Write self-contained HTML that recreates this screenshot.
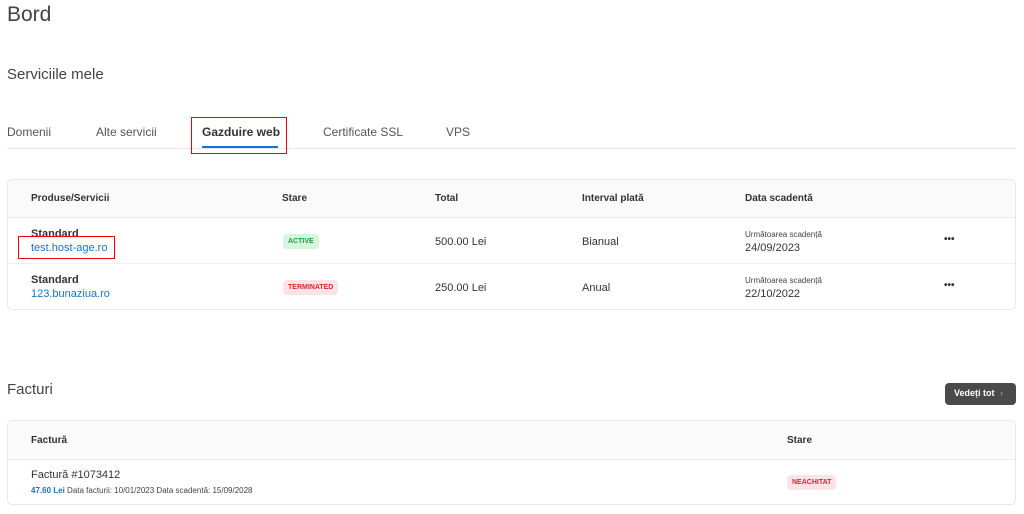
<!DOCTYPE html>
<html><head><meta charset="utf-8"><style>
*{margin:0;padding:0;box-sizing:border-box}
body{width:1024px;height:514px;background:#fff;font-family:"Liberation Sans",sans-serif;color:#333;position:relative;overflow:hidden}
.a{position:absolute;white-space:nowrap}
.card{position:absolute;left:7px;width:1009px;border:1px solid #e8e8e8;border-radius:5px;overflow:hidden;background:#fff}
.hd{background:#fafafa;border-bottom:1px solid #ececec;position:absolute;left:0;right:0;top:0}
.th{font-size:10px;font-weight:bold;color:#333}
.row{position:absolute;left:0;right:0;border-bottom:1px solid #efefef}
.b{font-size:11px;font-weight:bold;color:#333}
.lk{font-size:11px;color:#1a73c8}
.tx{font-size:11px;color:#333}
.sm{font-size:8px;color:#444}
.badge{font-size:7px;font-weight:bold;padding:4px 5px;border-radius:4px}
.dots{font-size:10px;font-weight:bold;color:#333}
</style></head><body>
<div class="a" style="left:7px;top:3px;font-size:21px;color:#444">Bord</div>
<div class="a" style="left:7px;top:66px;font-size:15px;color:#444">Serviciile mele</div>

<div class="a" style="left:7px;top:148px;width:1009px;height:1px;background:#e6e6e6"></div>
<div class="a" style="left:7px;top:125px;font-size:12px;color:#555">Domenii</div>
<div class="a" style="left:96px;top:125px;font-size:12px;color:#555">Alte servicii</div>
<div class="a" style="left:202px;top:125px;font-size:12px;font-weight:bold;color:#333">Gazduire web</div>
<div class="a" style="left:323px;top:125px;font-size:12px;color:#555">Certificate SSL</div>
<div class="a" style="left:446px;top:125px;font-size:12px;color:#555">VPS</div>
<div class="a" style="left:202px;top:146px;width:76px;height:2px;background:#1a73c8"></div>
<div class="a" style="left:191px;top:117px;width:96px;height:37px;border:1.5px solid #e00"></div>

<div class="card" style="top:179px;height:131px">
 <div class="hd" style="height:38px"></div>
 <div class="a th" style="left:23px;top:13px">Produse/Servicii</div>
 <div class="a th" style="left:274px;top:13px">Stare</div>
 <div class="a th" style="left:427px;top:13px">Total</div>
 <div class="a th" style="left:574px;top:13px">Interval plată</div>
 <div class="a th" style="left:737px;top:13px">Data scadentă</div>
 <div class="row" style="top:38px;height:46px"></div>
 <div class="a b" style="left:23px;top:48px">Standard</div>
 <div class="a lk" style="left:23px;top:62px">test.host-age.ro</div>
 <div class="a badge" style="left:275px;top:54px;background:#d5f5dc;color:#1e9e3e">ACTIVE</div>
 <div class="a tx" style="left:427px;top:56px">500.00 Lei</div>
 <div class="a tx" style="left:574px;top:56px">Bianual</div>
 <div class="a sm" style="left:737px;top:50px">Următoarea scadență</div>
 <div class="a tx" style="left:737px;top:62px">24/09/2023</div>
 <div class="a dots" style="left:936px;top:54px">•••</div>
 <div class="a b" style="left:23px;top:94px">Standard</div>
 <div class="a lk" style="left:23px;top:108px">123.bunaziua.ro</div>
 <div class="a badge" style="left:275px;top:100px;background:#fde3e5;color:#d8263a">TERMINATED</div>
 <div class="a tx" style="left:427px;top:102px">250.00 Lei</div>
 <div class="a tx" style="left:574px;top:102px">Anual</div>
 <div class="a sm" style="left:737px;top:96px">Următoarea scadență</div>
 <div class="a tx" style="left:737px;top:108px">22/10/2022</div>
 <div class="a dots" style="left:936px;top:100px">•••</div>
</div>
<div class="a" style="left:18px;top:236px;width:97px;height:23px;border:1.5px solid #e00"></div>

<div class="a" style="left:7px;top:381px;font-size:15px;color:#444">Facturi</div>
<div class="a" style="left:945px;top:383px;width:71px;height:22px;background:#4a4a4a;border-radius:4px;color:#fff;font-size:9px;font-weight:bold;padding:5px 0 0 9px">Vedeți tot <span style="color:#aaa;font-weight:normal;margin-left:3px">›</span></div>

<div class="card" style="top:420px;height:85px">
 <div class="hd" style="height:39px"></div>
 <div class="a th" style="left:23px;top:14px">Factură</div>
 <div class="a th" style="left:779px;top:14px">Stare</div>
 <div class="a tx" style="left:23px;top:48px">Factură #1073412</div>
 <div class="a" style="left:23px;top:65px;font-size:8px;color:#444"><b style="color:#1a73c8">47.60 Lei</b> Data facturii: 10/01/2023 Data scadentă: 15/09/2028</div>
 <div class="a badge" style="left:779px;top:54px;background:#fde3e5;color:#d8263a">NEACHITAT</div>
</div>
</body></html>
